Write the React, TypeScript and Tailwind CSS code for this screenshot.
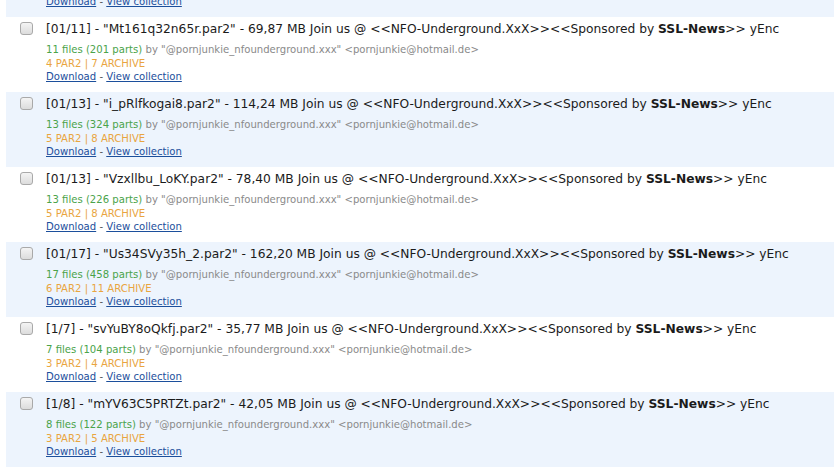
const rows = [
  { idx: "[01/11]", name: "Mt161q32n65r.par2", size: "69,87 MB", files: 11, parts: 201, par2: 4, archive: 7 },
  { idx: "[01/13]", name: "i_pRlfkogai8.par2", size: "114,24 MB", files: 13, parts: 324, par2: 5, archive: 8 },
  { idx: "[01/13]", name: "Vzxllbu_LoKY.par2", size: "78,40 MB", files: 13, parts: 226, par2: 5, archive: 8 },
  { idx: "[01/17]", name: "Us34SVy35h_2.par2", size: "162,20 MB", files: 17, parts: 458, par2: 6, archive: 11 },
  { idx: "[1/7]", name: "svYuBY8oQkfj.par2", size: "35,77 MB", files: 7, parts: 104, par2: 3, archive: 4 },
  { idx: "[1/8]", name: "mYV63C5PRTZt.par2", size: "42,05 MB", files: 8, parts: 122, par2: 3, archive: 5 },
];

type Row = (typeof rows)[number];

function Result({ row, alt }: { row: Row; alt: boolean }) {
  return (
    <div className={`flex h-[75px] pl-[14px] pt-[5px] ${alt ? "bg-[#edf4fd]" : "bg-white"}`}>
      <div className="pt-[0px]">
        <span className="block w-[13px] h-[13px] rounded-[3px] border border-[#a9a9a9] bg-gradient-to-b from-[#f4f4f4] to-[#dcdcdc]" />
      </div>
      <div className="ml-[13px] -mt-[2px]">
        <div className="text-[12.25px] leading-[18px] text-[#1b1b1b] whitespace-nowrap">
          {row.idx} - "{row.name}" - {row.size} Join us @ &lt;&lt;NFO-Underground.XxX&gt;&gt;&lt;&lt;Sponsored by{" "}
          <b>SSL-News</b>&gt;&gt; yEnc
        </div>
        <div className="mt-[5px] text-[10.1px] leading-[13.5px] whitespace-nowrap">
          <span className="text-[#4aa34a]">
            {row.files} files ({row.parts} parts)
          </span>{" "}
          <span className="text-[#8a8a8a]">by "@pornjunkie_nfounderground.xxx" &lt;pornjunkie@hotmail.de&gt;</span>
        </div>
        <div className="text-[10.1px] leading-[13.5px] text-[#e9a53f] whitespace-nowrap">
          {row.par2} PAR2 | {row.archive} ARCHIVE
        </div>
        <div className="text-[10.1px] leading-[13.5px] text-[#555] whitespace-nowrap">
          <a className="text-[#1c4f9c] underline">Download</a> - <a className="text-[#1c4f9c] underline">View collection</a>
        </div>
      </div>
    </div>
  );
}

export default function App() {
  return (
    <div className="w-[834px] h-[469px] overflow-hidden bg-white font-['DejaVu_Sans',Verdana,sans-serif]">
      <div className="ml-[6px] -mt-[58px]">
        <Result row={rows[5]} alt />
        {rows.map((r, i) => (
          <Result key={i} row={r} alt={i % 2 === 1} />
        ))}
      </div>
    </div>
  );
}
